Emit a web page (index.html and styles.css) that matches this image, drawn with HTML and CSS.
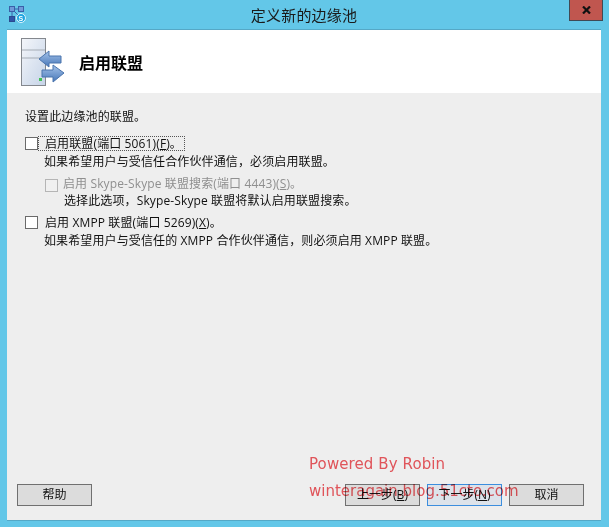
FILE: index.html
```html
<!DOCTYPE html>
<html lang="zh-CN">
<head>
<meta charset="utf-8">
<title>定义新的边缘池</title>
<link rel="stylesheet" href="styles.css">
</head>
<body>
<div class="window">
  <div class="titlebar">
    <svg class="app-icon" width="18" height="18" viewBox="0 0 18 18">
      <path d="M4 4v8M4 4h9M4 4l6 6" stroke="#3a5fa8" fill="none"/>
      <rect x="1.500" y="1.500" width="5" height="5" fill="#6f9ad8" stroke="#3a5fa8"/>
      <rect x="10.500" y="1.500" width="5" height="5" fill="#6f9ad8" stroke="#3a5fa8"/>
      <rect x="1.500" y="11.500" width="5" height="5" fill="#2f55a8" stroke="#2a4a90"/>
      <circle cx="13" cy="13" r="4.500" fill="#1fa5e0" stroke="#dff4fc"/>
      <text x="13" y="16" class="app-icon-s">S</text>
    </svg>
    <div class="title">定义新的边缘池</div>
    <div class="close">
      <svg width="9" height="8" viewBox="0 0 9 8"><path d="M1 0.5L8 7.5M8 0.5L1 7.5" stroke="#111" stroke-width="2.2" fill="none"/></svg>
    </div>
  </div>
  <div class="client">
    <header class="header">
      <svg class="hero" width="44" height="49" viewBox="0 0 44 49">
        <defs>
          <linearGradient id="srv" x1="0" y1="0" x2="1" y2="1"><stop offset="0" stop-color="#f4f6fa"/><stop offset="1" stop-color="#c6d4e8"/></linearGradient>
          <linearGradient id="arr" x1="0" y1="0" x2="0" y2="1"><stop offset="0" stop-color="#a6c4ea"/><stop offset="1" stop-color="#4676b8"/></linearGradient>
        </defs>
        <rect x="0.500" y="0.500" width="24" height="47" fill="url(#srv)" stroke="#84888e"/>
        <path d="M1 12h23M1 20h23" stroke="#a5acb5"/>
        <rect x="18" y="40" width="3" height="3" fill="#3fbf55"/>
        <path d="M18 21L28 13v5h12v7H28v4z" fill="url(#arr)" stroke="#4a74ad"/>
        <path d="M43 35L32 27v5H21v7h11v5z" fill="url(#arr)" stroke="#4a74ad"/>
      </svg>
      <h1 class="heading">启用联盟</h1>
    </header>
    <main class="body">
      <p class="intro">设置此边缘池的联盟。</p>
      <div class="opt">
        <span class="box"></span>
        <div class="opt-text">
          <div class="label focus">启用联盟(端口 5061)(<u>F</u>)。</div>
          <div class="desc">如果希望用户与受信任合作伙伴通信，必须启用联盟。</div>
        </div>
      </div>
      <div class="opt sub">
        <span class="box small"></span>
        <div class="opt-text">
          <div class="label off">启用 Skype-Skype 联盟搜索(端口 4443)(<u>S</u>)。</div>
          <div class="desc tight">选择此选项，Skype-Skype 联盟将默认启用联盟搜索。</div>
        </div>
      </div>
      <div class="opt third">
        <span class="box"></span>
        <div class="opt-text">
          <div class="label">启用 XMPP 联盟(端口 5269)(<u>X</u>)。</div>
          <div class="desc">如果希望用户与受信任的 XMPP 合作伙伴通信，则必须启用 XMPP 联盟。</div>
        </div>
      </div>
    </main>
    <footer class="footer">
      <button class="btn">帮助</button>
      <div class="nav">
        <button class="btn">上一步(<u>B</u>)</button>
        <button class="btn primary">下一步(<u>N</u>)</button>
        <button class="btn">取消</button>
      </div>
    </footer>
    <div class="mark mark-one">Powered By Robin</div>
    <div class="mark mark-two">winteragain.blog.51cto.com</div>
  </div>
</div>
</body>
</html>
```
FILE: styles.css
```css
* { box-sizing: border-box; }
html, body { margin: 0; height: 100%; }
body { font-family: "Open Sans", "Noto Sans CJK SC", sans-serif; font-size: 12px; color: #111; letter-spacing: 0.12px; }
.window { width: 609px; height: 527px; background: #63c7e8; display: flex; flex-direction: column; padding: 0 8px 6px 7px; }
.titlebar { height: 30px; flex: none; position: relative; display: flex; justify-content: center; border-bottom: 1px solid #55a8c6; }
.app-icon { position: absolute; left: 1px; top: 5px; }
.app-icon-s { font: bold 7px "Liberation Sans", sans-serif; fill: #fff; text-anchor: middle; }
.title { font-family: "Noto Sans CJK SC", sans-serif; font-size: 15px; line-height: 29px; letter-spacing: 0.2px; color: #1a1a1a; }
.close { position: absolute; right: -2px; top: 0; width: 34px; height: 21px; background: #c0564f; border: 1px solid #3f4a55; border-top: 0; display: flex; align-items: center; justify-content: center; }
.client { flex: 1; background: #eee; position: relative; display: flex; flex-direction: column; border-bottom: 1px solid #55a8c6; }
.header { height: 63px; flex: none; background: #fff; display: flex; align-items: center; padding-left: 14px; }
.hero { flex: none; align-self: flex-start; margin-top: 8px; }
.heading { margin: 0 0 0 14px; font-family: "Noto Sans CJK SC", sans-serif; font-size: 16px; font-weight: 700; line-height: 20px; letter-spacing: 0; color: #000; }
.body { flex: 1; padding: 15px 0 0 18px; }
.intro { margin: 0 0 10px; line-height: 18px; }
.opt { display: flex; align-items: flex-start; }
.box { flex: none; width: 13px; height: 13px; background: #fff; border: 1px solid #6a6a6a; margin-top: 1px; }
.box.small { background: #f0f0f0; border-color: #b5b5b5; margin-top: 3px; }
.opt-text { display: flex; flex-direction: column; align-items: flex-start; }
.label { line-height: 15px; padding-left: 7px; white-space: nowrap; }
.focus { outline: 1px dotted #555; outline-offset: -1px; padding-right: 3px; }
.off { color: #8f8f8f; padding-left: 5px; }
.desc { line-height: 18px; margin-top: 2px; margin-left: 6px; white-space: nowrap; }
.desc.tight { margin-top: 1px; }
.sub { margin: 5px 0 0 20px; }
.third { margin-top: 5px; }
.footer { flex: none; display: flex; justify-content: space-between; padding: 0 17px 14px 10px; }
.nav { display: flex; gap: 7px; }
.btn { width: 75px; height: 22px; background: #dcdcdc; border: 1px solid #707070; padding: 0; font: inherit; font-size: 12px; color: #111; line-height: 18px; }
.btn.primary { border-color: #3c8ede; background: #dde3ea; }
.mark { position: absolute; font-family: "DejaVu Sans", sans-serif; font-size: 15px; line-height: 20px; letter-spacing: 0.1px; color: #f05a60; white-space: nowrap; pointer-events: none; mix-blend-mode: multiply; }
.mark-one { left: 302px; top: 424px; }
.mark-two { left: 302px; top: 451px; letter-spacing: 0; }
```
